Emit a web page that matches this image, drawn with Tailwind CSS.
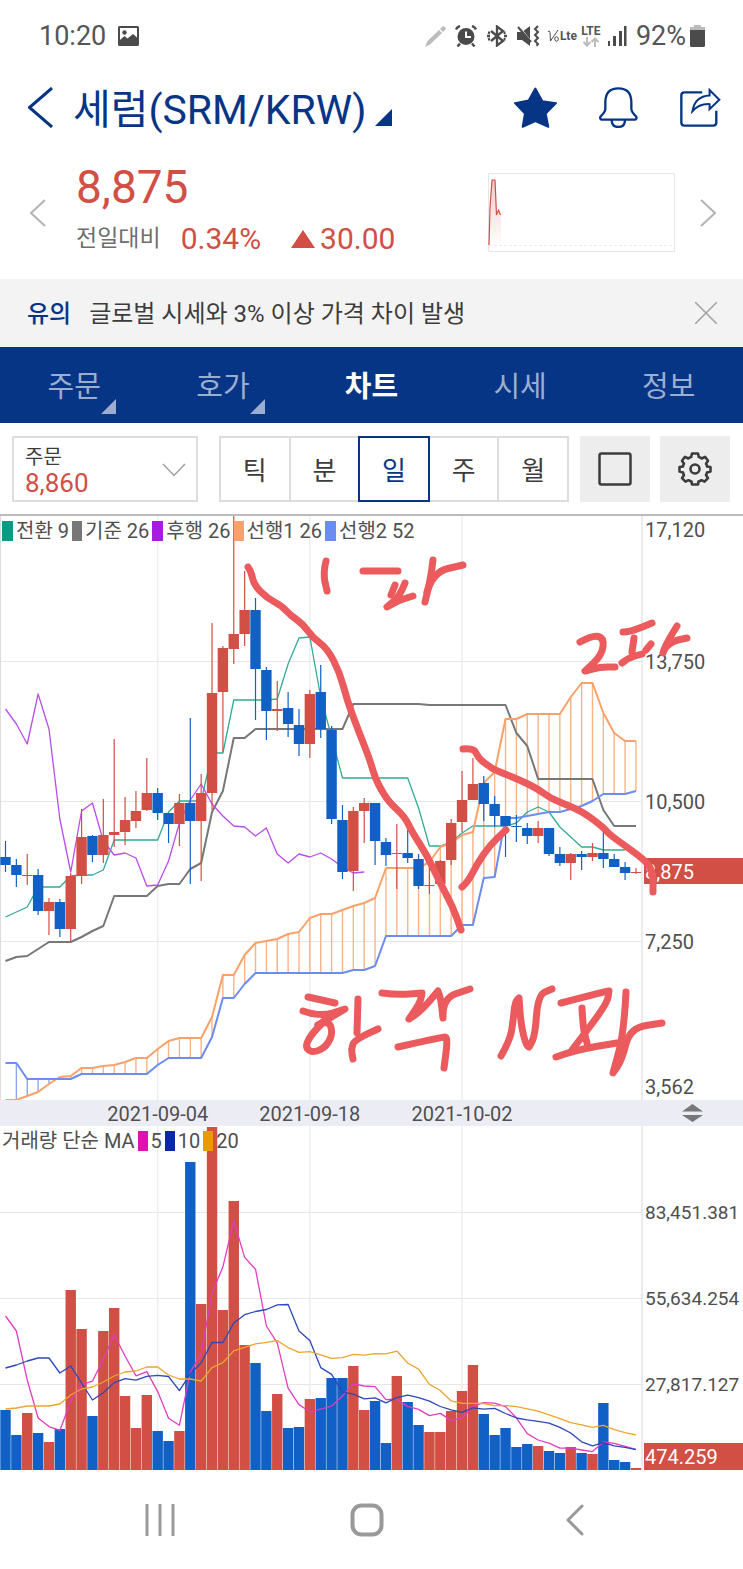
<!DOCTYPE html>
<html lang="ko">
<head>
  <meta charset="utf-8"/>
  <meta content="width=device-width, initial-scale=1" name="viewport"/>
  <title>세럼(SRM/KRW) 차트</title>
  <script src="https://cdn.jsdelivr.net/npm/@tailwindcss/browser@4"></script>
</head>
<body class="bg-white font-['Roboto','Noto_Sans_CJK_KR',sans-serif] text-[#3c3c3c]">

  <!-- status bar -->
  <div class="flex h-18 items-center pl-[39px] pr-[38px] text-[27px] leading-8 text-[#555]">
    <span>10:20</span>
    <svg class="ml-3 h-5 w-[21px]" viewBox="0 0 21 20" fill="#4b4b4b">
      <path fill-rule="evenodd" d="M1.500 0h18q1.500 0 1.500 1.500v17q0 1.500-1.500 1.500h-18Q0 20 0 18.500v-17Q0 0 1.500 0zM2 2v12l4.500-4 3 2.500 5.500-4.500 4 3.500V2z"/>
      <circle cx="6.500" cy="6.500" r="2.200"/>
    </svg>
    <div class="ml-auto flex items-center">
      <svg class="h-[21px] w-[21px]" viewBox="0 0 21 21" fill="#bcbcbc"><path d="M0 21l2.500-6L14 4l3 3L5.500 18zM15 3l2.500-2.500q1-.8 2 .2l.8.800q1 1 0 2L18 6z"/></svg>
      <svg class="ml-[9px] h-[22px] w-[22px]" viewBox="0 0 22 22" fill="none" stroke="#4b4b4b">
        <circle cx="11" cy="11.500" r="8.500" fill="#4b4b4b" stroke="none"/>
        <path stroke="#fff" stroke-width="2" d="M11 6.500V12h5"/>
        <path stroke-width="2.400" d="M1 4.500Q2 2 5 1M21 4.500Q20 2 17 1M5 18.500L2.500 21.500M17 18.500l2.500 3"/>
      </svg>
      <svg class="ml-[10px] h-[22px] w-5" viewBox="0 0 20 22" fill="none" stroke="#4b4b4b" stroke-width="2.300"><path d="M4 6l12 10-6 4.500V1.500L16 6 4 16"/><path stroke-width="2.600" d="M0 11h3M17 11h3M1 7.500l2 .5M1 14.500l2-.5M18.500 7.500l-2 .5M18.500 14.500l-2-.5"/></svg>
      <svg class="ml-[10px] h-[22px] w-[23px]" viewBox="0 0 23 22"><path fill="#4b4b4b" d="M0 7h5l8-6v20l-8-6H0z"/><path stroke="#fff" stroke-width="1.500" d="M1 .5l14 17"/><path stroke="#4b4b4b" stroke-width="2" fill="none" d="M1 2l13 15M21 1l-3 3 3 3-3 3 3 3-3 3 3 3-1.500 2"/></svg>
      <span class="ml-2 flex w-7 items-center text-[12px] leading-5"><svg class="h-[14px] w-3 shrink-0" viewBox="0 0 12 14" fill="none" stroke="#4b4b4b"><path d="M0 2.500q2-1 2 1l.5 8.500L10 1M5.500 9"/><ellipse cx="8.500" cy="10" rx="1.800" ry="2.200"/></svg><b>Lte</b></span>
      <span class="ml-1 flex w-[22px] flex-col items-center">
        <b class="text-[12px] leading-3 font-bold">LTE</b>
        <svg class="h-[10px] w-4" viewBox="0 0 16 10" fill="none" stroke="#bcbcbc" stroke-width="2"><path d="M4 0v8M.500 5L4 8.500 7.500 5M12 10V2M8.500 5L12 1.500 15.500 5"/></svg>
      </span>
      <svg class="ml-[6px] h-5 w-[19px]" viewBox="0 0 19 20" fill="#4b4b4b"><path d="M0 15h2v5H0zM5 10h3v10H5zM11 5h3v15h-3zM16 0h2.500v20H16z"/></svg>
      <span class="ml-[9px]">92%</span>
      <svg class="ml-1 h-[22px] w-[15px]" viewBox="0 0 15 22"><path fill="#bcbcbc" d="M4 0h7v2h4v4H0V2h4z"/><path fill="#4b4b4b" d="M0 5h15v15.500q0 1.500-1.500 1.500h-12Q0 22 0 20.500z"/></svg>
    </div>
  </div>

  <!-- title -->
  <header class="flex h-[71px] items-center pl-7 pr-[22px] text-[#073585]">
    <button type="button" aria-label="뒤로">
      <svg class="h-[41px] w-[25px]" viewBox="0 0 25 41" fill="none" stroke="currentColor" stroke-width="3"><path d="M24 1L1.500 20.500 24 40"/></svg>
    </button>
    <h1 class="ml-5 pt-1 text-[41px] leading-[48px]">세럼(SRM/KRW)</h1>
    <svg class="mt-5 ml-[9px] h-[17px] w-[17px]" viewBox="0 0 17 17" fill="currentColor"><path d="M17 0v17H0z"/></svg>
    <div class="ml-auto flex items-center gap-[42px]">
      <button type="button" aria-label="관심">
        <svg class="block h-[41px] w-[43px]" viewBox="0 0 129 122" fill="currentColor" stroke="currentColor" stroke-width="6" stroke-linejoin="round"><path d="M64 4l21 38 41 6-31 31 8 40-39-17-38 17 7-40L3 48l41-8z"/></svg>
      </button>
      <button type="button" aria-label="알림">
        <svg class="block h-[41px] w-[39px]" viewBox="0 0 117 123" fill="none" stroke="currentColor" stroke-width="7"><path d="M8 98Q1 95 5 88q13-12 14-22V44Q20 4 58 4t39 40v22q1 10 14 22 4 7-3 10zM38 100q1 20 20 20t20-20"/></svg>
      </button>
      <button type="button" aria-label="공유">
        <svg class="block h-[39px] w-[41px]" viewBox="0 0 122 116" fill="none" stroke="currentColor" stroke-width="7"><path d="M66 13H13Q4 13 4 22v81q0 9 9 9h86q9 0 9-9V68"/><path stroke-width="6" d="M37 69Q44 24 88 22V6l29 29-29 28V48Q58 46 37 69z"/></svg>
      </button>
    </div>
  </header>

  <!-- quote -->
  <section class="flex h-[136px] items-center pt-[3px] pl-[30px] pr-[27px]">
    <button type="button" aria-label="이전">
      <svg class="block h-7 w-4" viewBox="0 0 16 28" fill="none" stroke="#b4b4b4" stroke-width="2"><path d="M15 1L1 14l14 13"/></svg>
    </button>
    <div class="ml-[30px] text-[#d14f44]">
      <p class="text-[46px] leading-[52px]">8,875</p>
      <p class="flex items-center text-[30px] leading-[52px]">
        <span class="text-[23px] text-[#6e6e6e]">전일대비</span>
        <span class="ml-5">0.34%</span>
        <svg class="ml-[30px] h-[18px] w-6" viewBox="0 0 24 18" fill="currentColor"><path d="M12 0l12 18H0z"/></svg>
        <span class="ml-[5px]">30.00</span>
      </p>
    </div>
    <svg class="ml-auto h-[79px] w-[187px]" viewBox="0 0 187 79" fill="none">
      <defs><linearGradient id="fade" x2="0" y2="1"><stop stop-color="#d14f44" stop-opacity=".3"/><stop offset="1" stop-color="#d14f44" stop-opacity="0"/></linearGradient></defs>
      <path stroke="#e6e6e6" d="M.500.500h186v78H.500z"/>
      <path stroke="#ececec" stroke-dasharray="3 2" d="M1 72.500h185"/>
      <path fill="url(#fade)" d="M1 72L4 7h3l2 35 2-5 2 5v30z"/>
      <path stroke="#d14f44" stroke-width="1.200" d="M1 72L2 35 4 7h3l1.500 35 2-5 2 5"/>
    </svg>
    <button class="ml-[25px]" type="button" aria-label="다음">
      <svg class="block h-7 w-4" viewBox="0 0 16 28" fill="none" stroke="#b4b4b4" stroke-width="2"><path d="M1 1l14 13L1 27"/></svg>
    </button>
  </section>

  <!-- notice -->
  <div class="flex h-17 items-center bg-[#f3f3f3] pl-[27px] pr-[26px] text-2xl leading-8">
    <strong class="pt-[2px] font-medium text-[#073585]">유의</strong>
    <span class="ml-[18px] pt-[2px]">글로벌 시세와 3% 이상 가격 차이 발생</span>
    <button class="ml-auto" type="button" aria-label="닫기">
      <svg class="block h-[22px] w-[22px]" viewBox="0 0 22 22" fill="none" stroke="#a0a0a0" stroke-width="1.500"><path d="M0 0l22 22M22 0L0 22"/></svg>
    </button>
  </div>

  <nav class="grid h-19 grid-cols-5 items-center bg-[#073585] pt-1 text-center text-[29px] leading-10 text-[#9baed2]">
    <a href="#order"><span class="relative">주문<svg class="absolute -right-[15px] -bottom-[10px] h-[15px] w-[15px]" viewBox="0 0 15 15" fill="currentColor"><path d="M15 0v15H0z"/></svg></span></a>
    <a href="#book"><span class="relative">호가<svg class="absolute -right-[15px] -bottom-[10px] h-[15px] w-[15px]" viewBox="0 0 15 15" fill="currentColor"><path d="M15 0v15H0z"/></svg></span></a>
    <a class="font-bold text-white" href="#chart" aria-current="page">차트</a>
    <a href="#price">시세</a>
    <a href="#info">정보</a>
  </nav>

  <!-- toolbar -->
  <div class="flex h-[91px] pt-[13px] pr-[13px] pb-3 pl-3">
    <button class="flex flex-1 items-center border-2 border-[#ddd] pt-[2px] pl-[11px] pr-[10px] text-left" type="button" aria-haspopup="listbox">
      <span>
        <span class="block text-[20px] leading-[26px]">주문</span>
        <span class="block text-[26px] leading-[26px] text-[#d14f44]">8,860</span>
      </span>
      <svg class="ml-auto h-[14px] w-6" viewBox="0 0 24 14" fill="none" stroke="#a0a0a0" stroke-width="1.500"><path d="M1 1l11 11.500L23 1"/></svg>
    </button>
    <div class="ml-[21px] grid w-[350px] grid-cols-5 border-2 border-r-0 border-[#ddd] text-[26px] leading-9">
      <button class="border-r-2 border-[#ddd] pt-[3px]" type="button">틱</button>
      <button class="border-r-2 border-[#ddd] pt-[3px]" type="button">분</button>
      <button class="-my-[2px] -ml-[2px] border-2 border-[#073585] pt-[3px] text-[#073585]" type="button" aria-pressed="true">일</button>
      <button class="border-r-2 border-[#ddd] pt-[3px]" type="button">주</button>
      <button class="border-r-2 border-[#ddd] pt-[3px]" type="button">월</button>
    </div>
    <button class="ml-[11px] flex w-[70px] items-center justify-center bg-[#ededed]" type="button" aria-label="전체 화면">
      <svg class="h-[34px] w-[34px]" viewBox="0 0 34 34" fill="none" stroke="#3c3c3c" stroke-width="2.500"><rect x="1.500" y="1.500" width="31" height="31" rx="2"/></svg>
    </button>
    <button class="ml-[10px] flex w-[70px] items-center justify-center bg-[#ededed]" type="button" aria-label="설정">
      <svg class="h-[34px] w-[34px]" viewBox="0 0 34 34" fill="none" stroke="#3c3c3c" stroke-width="2.600" stroke-linejoin="round">
        <path d="M14 1.500h6l.8 3.500q2 .5 3 1.500L27 4.800l3 4-2 3q1 1.500 1 2.700l3.500.5v4.500l-3.500 1q-.3 1.500-1 2.500l2 3.200-3.500 3.500-3-1.500q-1.500 1-3 1.300l-.5 3h-6l-.5-3q-1.500-.3-3-1.300l-3 1.500L4 26.200 6 23q-.7-1-1-2.500l-3.500-1V15L5 14.500q0-1.200 1-2.700l-2-3 3-4 3.200 1.700q1-1 3-1.500z"/>
        <circle cx="17" cy="17" r="4.500"/>
      </svg>
    </button>
  </div>

  <main class="text-xl leading-[26px] text-[#4f4f4f]">
    <section class="relative border-t-2 border-[#bbb]">
      <svg id="price" class="block w-full" viewBox="0 516 743 584" fill="none"></svg>
      <div class="absolute top-[2px] left-[2px] flex gap-[3px]">
        <span class="flex items-center gap-[3px]"><i class="h-5 w-[11px] bg-[#0b9b83]"></i>전환 9</span>
        <span class="flex items-center gap-[3px]"><i class="h-5 w-[10px] bg-[#777]"></i>기준 26</span>
        <span class="flex items-center gap-[3px]"><i class="h-5 w-[11px] bg-[#a61de0]"></i>후행 26</span>
        <span class="flex items-center gap-[3px]"><i class="h-5 w-[10px] bg-[#f8a16a]"></i>선행1 26</span>
        <span class="flex items-center gap-[3px]"><i class="h-5 w-[11px] bg-[#6b8cf0]"></i>선행2 52</span>
      </div>
    </section>
    <div class="relative bg-[#ecedf4]">
      <svg id="dates" class="block w-full" viewBox="0 1100 743 26"></svg>
      <button class="absolute top-1 right-10 h-[18px] w-[21px]" type="button" aria-label="차트 높이 조절">
        <svg class="block h-[18px] w-[21px]" viewBox="0 0 21 18" fill="#777"><path d="M10.500 0L21 7.500H0zM0 11h21l-10.500 7z"/></svg>
      </button>
    </div>
    <section class="relative">
      <svg id="volume" class="block w-full" viewBox="0 1126 743 344" fill="none"></svg>
      <div class="absolute top-[2px] left-[2px] flex items-center gap-[3px]">
        <span>거래량 단순 MA</span>
        <i class="h-5 w-[10px] bg-[#e010b4]"></i><span>5</span>
        <i class="h-5 w-[10px] bg-[#0a28ae]"></i><span>10</span>
        <i class="h-5 w-[10px] bg-[#ea9a00]"></i><span>20</span>
      </div>
    </section>
  </main>

  <!-- android navigation -->
  <div class="grid h-[99px] grid-cols-3 items-center justify-items-center pr-16 pl-14">
    <button type="button" aria-label="최근 앱"><svg class="block h-8 w-8" viewBox="0 0 32 32" stroke="#999" stroke-width="3"><path d="M3 0v32M16 0v32M29 0v32"/></svg></button>
    <button type="button" aria-label="홈"><svg class="block h-[34px] w-[34px]" viewBox="0 0 34 34" fill="none" stroke="#999" stroke-width="4"><rect x="2.500" y="2.500" width="29" height="29" rx="9"/></svg></button>
    <button type="button" aria-label="뒤로 가기"><svg class="block h-8 w-[18px]" viewBox="0 0 18 32" fill="none" stroke="#999" stroke-width="3" stroke-linecap="round"><path d="M16 2L2 16l14 14"/></svg></button>
  </div>

<script>
  const RED = '#d14f44', BLUE = '#1060c6';
  const x = i => 5.5 + 10.87 * i;
  const fill = (n, v) => Array(n).fill(v);

  // [up?, body top, body bottom, high, low, volume top]
  const candles = [
    [0,857,865,841,872,1410],[0,865,875,859,887,1435],[1,875,876,854,885,1413],[0,875,911,869,915,1433],
    [1,902,911,898,935,1442],[0,902,929,899,937,1429],[1,876,929,873,941,1290],[1,837,876,809,884,1329],
    [0,836,855,835,862,1416],[1,835,855,799,863,1331],[1,832,835,739,847,1308],[1,820,832,797,845,1396],
    [1,811,821,791,828,1428],[1,793,810,758,811,1395],[0,793,813,788,820,1431],[0,813,824,813,843,1441],
    [1,803,824,794,846,1431],[0,803,821,718,884,1162],[1,793,821,774,881,1304],[1,693,793,623,810,1127],
    [1,648,692,646,752,1310],[1,634,649,516,664,1201],[1,610,634,571,646,1345],[0,610,669,598,720,1363],
    [0,670,711,667,740,1411],[1,709,711,681,731,1394],[0,708,724,692,737,1428],[0,725,744,709,756,1427],
    [1,694,744,690,758,1399],[0,692,729,665,738,1398],[0,730,819,726,824,1378],[0,820,872,805,879,1378],
    [1,811,871,807,891,1366],[1,803,811,798,843,1410],[0,803,841,803,865,1401],[0,842,855,838,866,1443],
    [1,853,854,824,889,1376],[0,853,858,830,863,1402],[0,859,886,854,889,1425],[1,885,886,860,894,1432],
    [1,861,884,860,884,1432],[1,823,860,819,865,1411],[1,800,822,771,832,1391],[1,784,800,758,800,1365],
    [0,783,804,776,821,1414],[0,804,816,796,827,1435],[0,816,826,816,857,1428],[0,826,827,815,842,1447],
    [0,828,836,823,844,1444],[1,828,836,821,843,1446],[0,828,854,828,856,1451],[0,854,863,847,866,1453],
    [1,854,863,853,880,1447],[0,854,857,851,870,1453],[1,853,857,843,861,1454],[0,853,859,832,868,1403],
    [0,859,867,854,867,1460],[0,867,873,862,880,1462],[1,872,873,868,874,1468]
  ];

  const tenkan = [917,912,907,887,887,887,876,875,875,870,...fill(5,840),812,801,801,801,753,753,...fill(4,700),699,664,638,637,697,737,
    ...fill(7,778),808,846,846,842,833,...fill(4,826),823,812,807,812,827,837,847,847,850,850,850];
  const kijun = [961,957,956,949,942,942,942,937,931,926,896,896,896,896,886,884,884,869,863,812,791,738,738,...fill(9,729),
    ...fill(7,704),...fill(8,705),733,746,...fill(6,779),810,826,826,826];
  const chikou = candles.slice(25).map(c => c[0] ? c[1] : c[2]);
  const spanA = [1100,1100,1096,1092,1084,1077,1076,1068,1068,1066,1065,1062,1058,1058,1049,1041,1038,1038,1038,1017,975,975,955,943,941,
    939,934,932,918,914,914,910,906,903,898,...fill(4,868),862,847,843,835,832,783,772,719,719,714,714,714,714,697,683,683,713,733,741,741];
  const spanB = [1063,1063,...fill(5,1079),...fill(7,1074),1065,1058,1058,1058,1058,1037,998,998,984,...fill(9,973),970,970,966,
    ...fill(7,936),925,925,878,877,818,818,816,814,812,812,809,806,801,794,794,794,791];

  const line = (ys, color, w) =>
    `<polyline points="${ys.map((y, i) => x(i) + ',' + y).join(' ')}" stroke="${color}" stroke-width="${w}" stroke-linejoin="round"/>`;
  const label = (y, t, color = '#4f4f4f', size = 20) => `<text x="645" y="${y}" font-size="${size}" fill="${color}">${t}</text>`;
  const grid = (ys, top, bottom) =>
    ys.map(y => `<path d="M0 ${y}H642" stroke="#e6e6e6" stroke-width="1"/>`).join('') +
    [14, 28, 42].map(i => `<path d="M${x(i)} ${top}V${bottom}" stroke="#eeeeee" stroke-width="1.5"/>`).join('') +
    `<path d="M642 ${top}V${bottom}" stroke="#e6e6e6" stroke-width="1.5"/>`;

  // hand-drawn notes; a repeated point keeps its corner sharp
  const notes = [
    '248,567 251,571 254,585 267,598 282,606 290,615 303,624 313,638 327,648 340,673 347,700 357,727 370,760 375,778 383,793 390,803 405,817 412,832 427,855 440,883 453,907 461,930',
    '326,561 323,573 327,591', '363,571 398,571', '395,585 391,595', '405,583 400,596 387,607 387,607 400,600 413,596',
    '433,560 431,577 425,602', '427,592 433,572 463,565',
    '580,642 593,635 604,638 602,655 585,671 585,671 600,667 615,667', '623,632 630,632 652,623', '634,638 632,652', '651,644 646,650',
    '622,663 628,658 642,654', '677,626 667,642 663,653', '664,650 669,642 687,638',
    '463,749 474,748 478,758 490,767 495,770 520,780 538,789 550,798 567,805 583,812 603,827 610,835 627,847 647,862 653,873 653,892',
    '462,887 468,882 477,864 490,845 506,830',
    '308,997 335,1003', '303,1011 320,1017 345,1009 345,1009 318,1025',
    '318,1025 328,1020 333,1032 327,1046 314,1053 305,1048 310,1036 325,1020', '358,999 357,1033', '378,1029 355,1039 351,1049 353,1059',
    '382,993 397,995 422,993 422,993 420,1003 409,1019 409,1019 422,1010 438,991 438,991 441,1000 443,1018', '443,1015 443,998 470,989',
    '398,1047 442,1037 448,1037 444,1068',
    '501,1056 510,1040 513,1022 515,1002 519,998 519,998 521,1025 526,1045 529,1047 529,1047 535,1036 538,995 552,989',
    '561,1003 607,991 609,991 609,991 607,1004 572,1050', '582,1008 583,1028 587,1043', '556,1057 575,1050 617,1043',
    '626,992 624,1033 613,1073 613,1073 622,1060 630,1028 662,1023'
  ];
  function smooth(str) {
    const p = str.split(' ').map(s => s.split(',').map(Number));
    let d = `M${p[0]}`;
    for (let i = 1; i < p.length - 1; i++) {
      d += `Q${p[i]} ${(p[i][0] + p[i + 1][0]) / 2},${(p[i][1] + p[i + 1][1]) / 2}`;
    }
    return d + `L${p[p.length - 1]}`;
  }

  document.getElementById('price').innerHTML =
    grid([661.5, 801.5, 941.5], 516, 1100) +
    '<path d="M.5 516V1100" stroke="#ddd"/>' +
    spanA.map((a, i) => i && `<path d="M${x(i)} ${a}V${spanB[i]}" stroke="${a < spanB[i] ? '#f9b385' : '#8ba6f4'}" stroke-width="1.4"/>`).join('') +
    line(tenkan, '#31ab97', 1.3) + line(kijun, '#777', 2) + line(chikou, '#b94dea', 1.3) +
    line(spanA, '#f8a16a', 2) + line(spanB, '#6b8cf0', 2) +
    candles.map(([up, top, bottom, high, low], i) => {
      const c = up ? RED : BLUE;
      return `<path d="M${x(i)} ${high}V${low}" stroke="${c}" stroke-width="1.2"/>` +
        `<rect x="${x(i) - 5.2}" y="${top}" width="10.4" height="${bottom - top}" fill="${c}"/>`;
    }).join('') +
    label(537, '17,120') + label(669, '13,750') + label(809, '10,500') + label(949, '7,250') + label(1094, '3,562') +
    `<rect x="644" y="858" width="99" height="26" fill="${RED}"/>` + label(879, '8,875', '#fff') +
    `<g stroke="#eb5a5c" stroke-width="7" stroke-linecap="round" stroke-linejoin="round">${notes.map(n => `<path d="${smooth(n)}"/>`).join('')}</g>`;

  document.getElementById('dates').innerHTML = ['2021-09-04', '2021-09-18', '2021-10-02'].map((d, n) =>
    `<text x="${x(14 + 14 * n)}" y="1121" font-size="20" fill="#4f4f4f" text-anchor="middle">${d}</text>`).join('');

  // moving average of the bar heights; head = values that need bars left of the window
  const base = 1470;
  const average = (n, head) => candles.map((c, i) => i < n - 1 ? head[i] :
    candles.slice(i - n + 1, i + 1).reduce((s, b) => s + b[5], 0) / n);
  document.getElementById('volume').innerHTML =
    grid([1212.5, 1298.5, 1384.5], 1126, base) +
    candles.map((c, i) => `<rect x="${x(i) - 5.2}" y="${c[5]}" width="10.4" height="${base - c[5]}" fill="${c[0] ? RED : BLUE}"/>`).join('') +
    line(average(5, [1316,1331,1380,1418]), '#e23cc0', 1.3) +
    line(average(10, [1368,1365,1361,1358,1358,1373,1366,1383,1400]), '#2c47b8', 1.3) +
    line(average(20, [1409,1408,1406,1406,1406,1404,1395,1389,1387,1382,1376,1372,1371,1367,1367,1375,1379,1379,1381]), '#eda52a', 1.3) +
    label(1219, '83,451.381', '#4f4f4f', 19) + label(1305, '55,634.254', '#4f4f4f', 19) + label(1391, '27,817.127', '#4f4f4f', 19) +
    `<rect x="644" y="1443" width="99" height="27" fill="${RED}"/>` + label(1464, '474.259', '#fff');
</script>
</body>
</html>
